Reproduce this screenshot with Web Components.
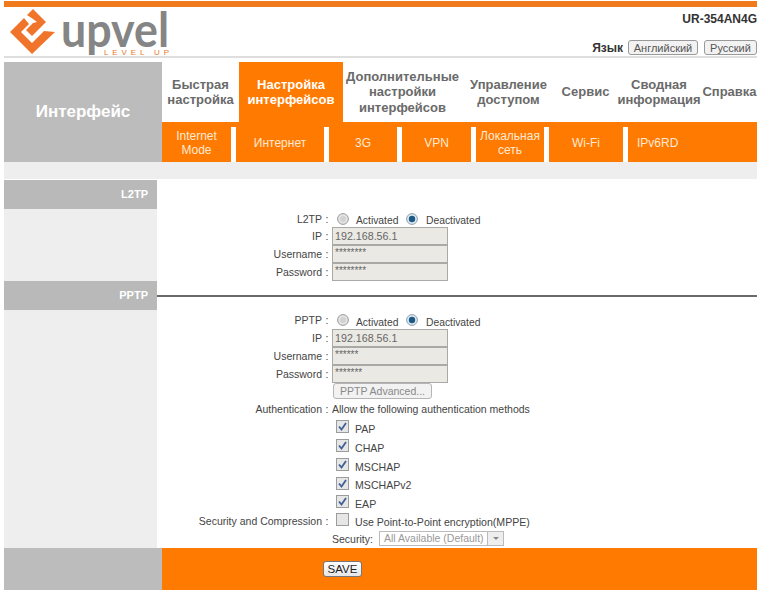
<!DOCTYPE html>
<html lang="ru">
<head>
<meta charset="utf-8">
<title>UR-354AN4G</title>
<style>
  html, body { margin: 0; background: #fff; }
  body { padding: 1px 3px 0 4px; font-family: "Liberation Sans", Arial, sans-serif; font-size: 10.5px; color: #444; }
  router-page { width: 753px; }
</style>
</head>
<body>
<router-page>
  <router-header model="UR-354AN4G"></router-header>
  <router-nav title-text="Интерфейс">
    <nav-tab slot="tabs" w="77">Быстрая<br>настройка</nav-tab>
    <nav-tab slot="tabs" w="104" active>Настройка<br>интерфейсов</nav-tab>
    <nav-tab slot="tabs" w="119">Дополнительные<br>настройки<br>интерфейсов</nav-tab>
    <nav-tab slot="tabs" w="93">Управление<br>доступом</nav-tab>
    <nav-tab slot="tabs" w="61">Сервис</nav-tab>
    <nav-tab slot="tabs" w="86">Сводная<br>информация</nav-tab>
    <nav-tab slot="tabs" w="55">Справка</nav-tab>
    <sub-tab slot="subs" w="74">Internet<br>Mode</sub-tab>
    <sub-tab slot="subs" w="93">Интернет</sub-tab>
    <sub-tab slot="subs" w="73">3G</sub-tab>
    <sub-tab slot="subs" w="74">VPN</sub-tab>
    <sub-tab slot="subs" w="73">Локальная<br>сеть</sub-tab>
    <sub-tab slot="subs" w="79">Wi-Fi</sub-tab>
    <sub-tab slot="subs" w="129" last>IPv6RD</sub-tab>
  </router-nav>

  <router-section heading="L2TP">
    <form-row label="L2TP" h="17"><radio-pair></radio-pair></form-row>
    <form-row label="IP"><text-box>192.168.56.1</text-box></form-row>
    <form-row label="Username"><text-box small>********</text-box></form-row>
    <form-row label="Password"><text-box small>********</text-box></form-row>
  </router-section>

  <router-section heading="PPTP" ruled>
    <form-row label="PPTP"><radio-pair></radio-pair></form-row>
    <form-row label="IP"><text-box>192.168.56.1</text-box></form-row>
    <form-row label="Username"><text-box small>******</text-box></form-row>
    <form-row label="Password"><text-box small>*******</text-box></form-row>
    <form-row h="16"><flat-button disabled>PPTP Advanced...</flat-button></form-row>
    <form-row label="Authentication" h="19">Allow the following authentication methods</form-row>
    <form-row h="19"><check-item checked>PAP</check-item></form-row>
    <form-row h="19"><check-item checked>CHAP</check-item></form-row>
    <form-row h="19"><check-item checked>MSCHAP</check-item></form-row>
    <form-row h="18"><check-item checked>MSCHAPv2</check-item></form-row>
    <form-row h="19"><check-item checked>EAP</check-item></form-row>
    <form-row label="Security and Compression" h="17"><check-item>Use Point-to-Point encryption(MPPE)</check-item></form-row>
    <form-row h="19"><select-box label="Security:">All Available (Default)</select-box></form-row>
  </router-section>

  <router-footer><flat-button>SAVE</flat-button></router-footer>
</router-page>

<script>
const ORANGE = '#ff7a00';
const GREY = '#bcbcbc';

// small helper, every element below is just a shadow root with fixed markup
function define(name, html, setup) {
  customElements.define(name, class extends HTMLElement {
    constructor() {
      super();
      this.attachShadow({ mode: 'open' });
    }
    connectedCallback() {
      this.shadowRoot.innerHTML = typeof html === 'function' ? html(this) : html;
      if (setup) setup(this);
    }
  });
}

define('router-page', `
  <style>:host { display: block; }</style>
  <slot></slot>
`);

define('router-header', (el) => `
  <style>
    :host { display: block; height: 58px; }
    .bar { height: 6px; background: #f07a1c; }
    .main { display: flex; justify-content: space-between; height: 49px; border-bottom: 2px solid #dedede; }
    svg { display: block; margin-left: -4px; overflow: visible; }
    .right { display: flex; flex-direction: column; align-items: flex-end; justify-content: space-between; padding-bottom: 1px; }
    .model { font: bold 12px "Liberation Sans", Arial, sans-serif; color: #333; margin-top: 5px; }
    .lang { display: flex; align-items: center; gap: 5px; font: bold 12px "Liberation Sans", Arial, sans-serif; color: #333; }
    .lang button { font: 11px "Liberation Sans", Arial, sans-serif; color: #555; height: 15px; padding: 0; border: 1px solid #999; border-radius: 3px; background: #f2f2f2; }
    .en { width: 70px; }
    .ru { width: 53px; margin-left: 1px; }
  </style>
  <div class="bar"></div>
  <div class="main">
    <svg width="175" height="49" viewBox="0 7 175 49" aria-label="upvel logo">
      <polygon fill="#f0752a" points="10,32 24,18 29,24 21,32 32,43 44,31 55,32 32,54"/>
      <polygon fill="#f0752a" points="27,15 33,9 46,22 32,36 26,30 33,23 37,22 33,19"/>
      <text x="61" y="47" font-family="Lato, sans-serif" font-weight="700" font-size="47" fill="#858585" textLength="108" lengthAdjust="spacingAndGlyphs">upvel</text>
      <text x="104" y="55" font-family="Liberation Sans, sans-serif" font-size="8" fill="#e8782a" textLength="65" lengthAdjust="spacing">LEVEL UP</text>
    </svg>
    <div class="right">
      <div class="model">${el.getAttribute('model')}</div>
      <div class="lang">Язык <button class="en">Английский</button><button class="ru">Русский</button></div>
    </div>
  </div>
`);

define('router-nav', (el) => `
  <style>
    :host { display: grid; grid-template-columns: 158px 1fr; grid-template-rows: 100px 17px; margin: 3px 0 1px; }
    .title { background: ${GREY}; color: #fff; font: bold 17px "Liberation Sans", Arial, sans-serif; display: flex; align-items: center; justify-content: center; }
    .tabs { display: flex; height: 60px; }
    .subs { display: flex; height: 40px; background: ${ORANGE}; }
    .strip { grid-column: 1 / -1; background: #eee; }
  </style>
  <div class="title">${el.getAttribute('title-text')}</div>
  <div>
    <div class="tabs"><slot name="tabs"></slot></div>
    <div class="subs"><slot name="subs"></slot></div>
  </div>
  <div class="strip"></div>
`);

define('nav-tab', (el) => `
  <style>
    :host { display: flex; align-items: center; justify-content: center; text-align: center; flex: none; width: ${el.getAttribute('w')}px;
      font: bold 13px/15.5px "Liberation Sans", Arial, sans-serif; color: #6a6a6a; white-space: nowrap; }
    :host([active]) { background: ${ORANGE}; color: #fff; }
  </style>
  <div><slot></slot></div>
`);

define('sub-tab', (el) => `
  <style>
    :host { display: flex; flex: none; width: ${el.getAttribute('w')}px; box-sizing: border-box; font: 12px/14px "Liberation Sans", Arial, sans-serif; color: #ffe9d4; }
    .in { flex: 1; display: flex; align-items: center; justify-content: center; text-align: center; padding-top: 1px; }
    .gap { width: 5px; margin-top: 5px; background: #fff; }
    :host([last]) .in { justify-content: flex-start; padding-left: 9px; }
    :host([last]) .gap { display: none; }
  </style>
  <div class="in"><div><slot></slot></div></div>
  <div class="gap"></div>
`);

define('router-section', (el) => `
  <style>
    :host { display: grid; grid-template-columns: 153px 1fr; }
    .left { display: flex; flex-direction: column; background: #eee; }
    .head { height: 29px; background: #b9b9b9; color: #fff; font: bold 11px/29px "Liberation Sans", Arial, sans-serif; text-align: right; padding-right: 9px; }
    .band { height: 30px; display: flex; align-items: center; }
    .rule { flex: 1; height: 2px; background: #6a6a6a; display: ${el.hasAttribute('ruled') ? 'block' : 'none'}; }
  </style>
  <div class="left"><div class="head">${el.getAttribute('heading')}</div></div>
  <div>
    <div class="band"><div class="rule"></div></div>
    <slot></slot>
  </div>
`);

define('form-row', (el) => {
  const label = el.getAttribute('label');
  return `
  <style>
    :host { display: grid; grid-template-columns: 165px 10px 1fr; align-items: center; height: ${el.getAttribute('h') || 18}px; white-space: nowrap; }
    .colon { text-align: center; }
    .label { text-align: right; }
  </style>
  <div class="label">${label || ''}</div>
  <div class="colon">${label ? ':' : ''}</div>
  <div><slot></slot></div>`;
});

define('text-box', `
  <style>
    :host { display: block; box-sizing: border-box; width: 116px; height: 18px; background: #ebe9e3; border: 1px solid #a9a9a5; padding-left: 2px;
      font: 10.7px/16px "Liberation Sans", Arial, sans-serif; color: #666; }
    :host([small]) { font-size: 10px; line-height: 13px; }
  </style>
  <slot></slot>
`);

define('radio-pair', `
  <style>
    :host { display: flex; align-items: center; padding-left: 5px; font-size: 10.3px; }
    svg { flex: none; display: block; }
    span { margin-top: 4px; }
    .a { margin-left: 7px; width: 50px; }
    .b { margin-left: 8px; }
  </style>
  <svg width="12" height="12" viewBox="0 0 12 12"><circle cx="6" cy="6" r="5.4" fill="#e4e4e4" stroke="#9a9a9a"/><circle cx="6" cy="6" r="3" fill="#d2d2d2"/></svg>
  <span class="a">Activated</span>
  <svg width="12" height="12" viewBox="0 0 12 12"><circle cx="6" cy="6" r="5.4" fill="#dfe8ee" stroke="#8aa0b0"/><circle cx="6" cy="6" r="3.2" fill="#1c5a86"/></svg>
  <span class="b">Deactivated</span>
`);

define('check-item', (el) => `
  <style>
    :host { display: flex; align-items: center; padding-left: 4px; font-size: 10.6px; }
    svg { flex: none; display: block; margin-top: -2px; }
    span { margin-left: 6px; margin-top: 2px; }
  </style>
  <svg width="13" height="13" viewBox="0 0 13 13">
    <rect x=".5" y=".5" width="12" height="12" fill="#e6e6e6" stroke="#9c9c9c"/>
    ${el.hasAttribute('checked') ? '<path d="M3 6.5 L5.5 9.5 L10 3" fill="none" stroke="#3f5f96" stroke-width="1.8"/>' : ''}
  </svg>
  <span><slot></slot></span>
`);

define('flat-button', `
  <style>
    :host { display: inline-block; box-sizing: border-box; width: 39px; height: 16px; border: 1px solid #777; border-radius: 3px;
      background: linear-gradient(#fff, #e6e6e6); font: 11.5px/14px "Liberation Sans", Arial, sans-serif; color: #222; text-align: center; }
    :host([disabled]) { margin-left: 1px; width: 99px; border-color: #b5b5b5; background: #f2f2f2; color: #888; font-size: 10.5px; }
  </style>
  <slot></slot>
`);

define('select-box', (el) => `
  <style>
    :host { display: flex; align-items: center; }
    .lab { width: 47px; }
    .box { display: flex; align-items: center; box-sizing: border-box; width: 125px; height: 15px; border: 1px solid #bbb; font-size: 10.5px; color: #999; padding-left: 4px; margin-top: -1px; white-space: nowrap; }
    .arrow { margin-left: auto; width: 16px; height: 13px; box-sizing: border-box; border-left: 1px solid #bbb; background: #eee; display: flex; align-items: center; justify-content: center; }
    i { display: block; border: 3px solid transparent; border-top: 3px solid #888; border-bottom: 0; }
  </style>
  <div class="lab">${el.getAttribute('label')}</div>
  <div class="box"><slot></slot><div class="arrow"><i></i></div></div>
`);

define('router-footer', `
  <style>
    :host { display: grid; grid-template-columns: 158px 1fr; height: 42px; }
    .l { background: ${GREY}; }
    .r { background: ${ORANGE}; display: flex; align-items: center; padding-left: 161px; }
  </style>
  <div class="l"></div>
  <div class="r"><slot></slot></div>
`);
</script>
</body>
</html>
